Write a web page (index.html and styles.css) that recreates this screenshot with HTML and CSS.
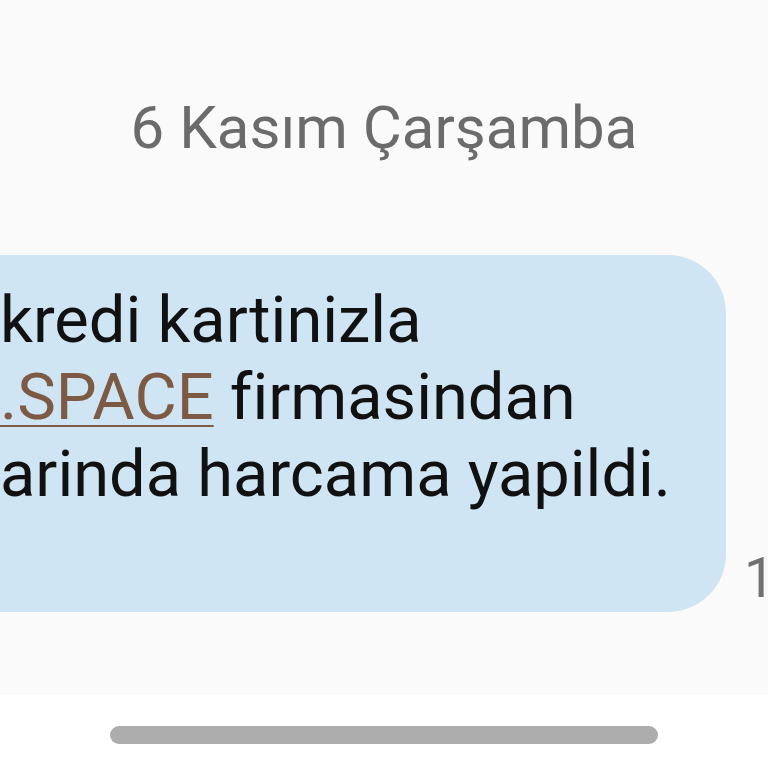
FILE: index.html
```html
<!DOCTYPE html>
<html lang="tr">
<head>
<meta charset="utf-8">
<link rel="stylesheet" href="styles.css">
</head>
<body>
<main class="chat">
  <div class="date">6 Kasım Çarşamba</div>
  <div class="row">
    <div class="bubble">
      <p class="line">kredi kartinizla</p>
      <p class="line"><a class="link" href="#">.SPACE</a> firmasindan</p>
      <p class="line">arinda harcama yapildi.</p>
    </div>
    <div class="time">1</div>
  </div>
</main>
<footer class="navbar"><div class="handle"></div></footer>
</body>
</html>
```
FILE: styles.css
```css
html, body {
  margin: 0;
  padding: 0;
  width: 768px;
  height: 768px;
  overflow: hidden;
  background: #ffffff;
  font-family: Roboto, "Noto Sans", sans-serif;
}
.chat {
  height: 695px;
  background: #fafafa;
  overflow: hidden;
}
.date {
  padding-top: 96px;
  height: 64px;
  line-height: 64px;
  font-size: 60px;
  color: #6b6b6b;
  text-align: center;
}
.row {
  margin-top: 95px;
  display: flex;
  align-items: flex-end;
}
.bubble {
  margin-left: -60px;
  width: 786px;
  height: 357px;
  box-sizing: border-box;
  padding: 27px 0 0 60px;
  background: #d0e5f3;
  border-radius: 58px;
  flex: none;
}
.line {
  margin: 0;
  font-size: 65px;
  line-height: 77px;
  color: #111111;
  white-space: nowrap;
}
.link {
  color: #7d5a44;
  text-decoration: underline;
  text-decoration-thickness: 2px;
  text-underline-offset: 6px;
}
.time {
  margin-left: 18px;
  margin-bottom: 6px;
  font-size: 55px;
  line-height: 55px;
  color: #707070;
  white-space: nowrap;
}
.navbar {
  height: 73px;
  display: flex;
  justify-content: center;
  padding-top: 31px;
  box-sizing: border-box;
}
.handle {
  width: 548px;
  height: 18px;
  border-radius: 9px;
  background: #adadad;
}
```
